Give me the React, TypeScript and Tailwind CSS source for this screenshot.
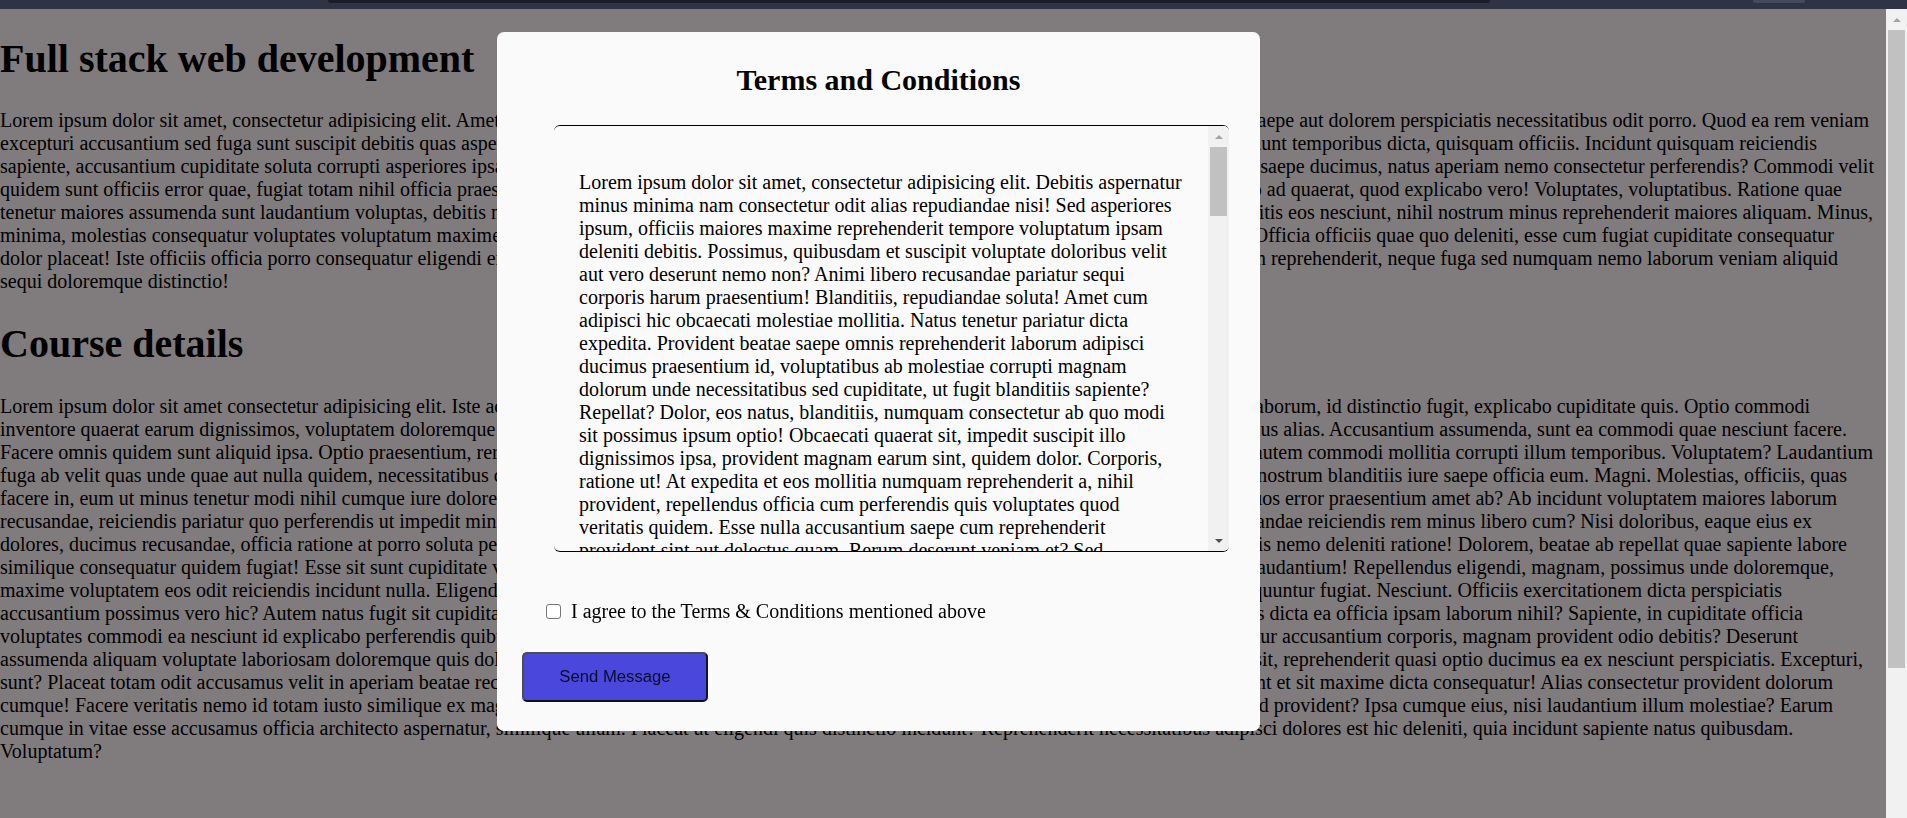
import React from "react";

type Line = { w: string; l: string; r: string };

const p1: Line[] = [
  { w: "w-[1869px]", l: "Lorem ipsum dolor sit amet, consectetur adipisicing elit. Amet quibusdam", r: "saepe aut dolorem perspiciatis necessitatibus odit porro. Quod ea rem veniam" },
  { w: "w-[1817px]", l: "excepturi accusantium sed fuga sunt suscipit debitis quas asperiores", r: "nesciunt temporibus dicta, quisquam officiis. Incidunt quisquam reiciendis" },
  { w: "w-[1874px]", l: "sapiente, accusantium cupiditate soluta corrupti asperiores ipsam", r: "ipsa saepe ducimus, natus aperiam nemo consectetur perferendis? Commodi velit" },
  { w: "w-[1842px]", l: "quidem sunt officiis error quae, fugiat totam nihil officia praesentium", r: "quo ad quaerat, quod explicabo vero! Voluptates, voluptatibus. Ratione quae" },
  { w: "w-[1873px]", l: "tenetur maiores assumenda sunt laudantium voluptas, debitis nobis", r: "debitis eos nesciunt, nihil nostrum minus reprehenderit maiores aliquam. Minus," },
  { w: "w-[1834px]", l: "minima, molestias consequatur voluptates voluptatum maxime odio", r: "nobis? Officia officiis quae quo deleniti, esse cum fugiat cupiditate consequatur" },
  { w: "w-[1838px]", l: "dolor placeat! Iste officiis officia porro consequatur eligendi error", r: "in reprehenderit, neque fuga sed numquam nemo laborum veniam aliquid" },
];

const p2: Line[] = [
  { w: "w-[1810px]", l: "Lorem ipsum dolor sit amet consectetur adipisicing elit. Iste accusamus", r: "laborum, id distinctio fugit, explicabo cupiditate quis. Optio commodi" },
  { w: "w-[1847px]", l: "inventore quaerat earum dignissimos, voluptatem doloremque", r: "minus alias. Accusantium assumenda, sunt ea commodi quae nesciunt facere." },
  { w: "w-[1873px]", l: "Facere omnis quidem sunt aliquid ipsa. Optio praesentium, rerum", r: "autem commodi mollitia corrupti illum temporibus. Voluptatem? Laudantium" },
  { w: "w-[1847px]", l: "fuga ab velit quas unde quae aut nulla quidem, necessitatibus cum", r: "nostrum blanditiis iure saepe officia eum. Magni. Molestias, officiis, quas" },
  { w: "w-[1837px]", l: "facere in, eum ut minus tenetur modi nihil cumque iure dolorem", r: "quos error praesentium amet ab? Ab incidunt voluptatem maiores laborum" },
  { w: "w-[1812px]", l: "recusandae, reiciendis pariatur quo perferendis ut impedit minus", r: "recusandae reiciendis rem minus libero cum? Nisi doloribus, eaque eius ex" },
  { w: "w-[1847px]", l: "dolores, ducimus recusandae, officia ratione at porro soluta perferendis", r: "quis nemo deleniti ratione! Dolorem, beatae ab repellat quae sapiente labore" },
  { w: "w-[1834px]", l: "similique consequatur quidem fugiat! Esse sit sunt cupiditate vel", r: "laudantium! Repellendus eligendi, magnam, possimus unde doloremque," },
  { w: "w-[1782px]", l: "maxime voluptatem eos odit reiciendis incidunt nulla. Eligendi", r: "consequuntur fugiat. Nesciunt. Officiis exercitationem dicta perspiciatis" },
  { w: "w-[1803px]", l: "accusantium possimus vero hic? Autem natus fugit sit cupiditate", r: "quas dicta ea officia ipsam laborum nihil? Sapiente, in cupiditate officia" },
  { w: "w-[1798px]", l: "voluptates commodi ea nesciunt id explicabo perferendis quibusdam", r: "consectetur accusantium corporis, magnam provident odio debitis? Deserunt" },
  { w: "w-[1863px]", l: "assumenda aliquam voluptate laboriosam doloremque quis dolor", r: "sit, reprehenderit quasi optio ducimus ea ex nesciunt perspiciatis. Excepturi," },
  { w: "w-[1833px]", l: "sunt? Placeat totam odit accusamus velit in aperiam beatae recusandae", r: "sunt et sit maxime dicta consequatur! Alias consectetur provident dolorum" },
  { w: "w-[1833px]", l: "cumque! Facere veritatis nemo id totam iusto similique ex magnam", r: "quod provident? Ipsa cumque eius, nisi laudantium illum molestiae? Earum" },
];

const terms = [
  "Lorem ipsum dolor sit amet, consectetur adipisicing elit. Debitis aspernatur",
  "minus minima nam consectetur odit alias repudiandae nisi! Sed asperiores",
  "ipsum, officiis maiores maxime reprehenderit tempore voluptatum ipsam",
  "deleniti debitis. Possimus, quibusdam et suscipit voluptate doloribus velit",
  "aut vero deserunt nemo non? Animi libero recusandae pariatur sequi",
  "corporis harum praesentium! Blanditiis, repudiandae soluta! Amet cum",
  "adipisci hic obcaecati molestiae mollitia. Natus tenetur pariatur dicta",
  "expedita. Provident beatae saepe omnis reprehenderit laborum adipisci",
  "ducimus praesentium id, voluptatibus ab molestiae corrupti magnam",
  "dolorum unde necessitatibus sed cupiditate, ut fugit blanditiis sapiente?",
  "Repellat? Dolor, eos natus, blanditiis, numquam consectetur ab quo modi",
  "sit possimus ipsum optio! Obcaecati quaerat sit, impedit suscipit illo",
  "dignissimos ipsa, provident magnam earum sint, quidem dolor. Corporis,",
  "ratione ut! At expedita et eos mollitia numquam reprehenderit a, nihil",
  "provident, repellendus officia cum perferendis quis voluptates quod",
  "veritatis quidem. Esse nulla accusantium saepe cum reprehenderit",
  "provident sint aut delectus quam. Rerum deserunt veniam et? Sed",
  "doloremque eius quas, molestias ipsa ipsum perspiciatis nemo.",
  "Architecto, quae voluptatibus. Nesciunt, officia ipsum.",
];

function Arrow({ up, color }: { up: boolean; color: string }) {
  return (
    <svg width="8" height="4" viewBox="0 0 8 4">
      <path d={up ? "M0 4L4 0L8 4Z" : "M0 0L4 4L8 0Z"} fill={color} />
    </svg>
  );
}

function TextLine({ line }: { line: Line }) {
  return (
    <div className={`flex justify-between whitespace-nowrap ${line.w}`}>
      <span>{line.l}</span>
      <span>{line.r}</span>
    </div>
  );
}

export default function App() {
  return (
    <div className="w-full h-screen flex flex-col overflow-hidden font-['Liberation_Serif','Times_New_Roman',serif] text-black">
      {/* top bar */}
      <div className="h-[9px] shrink-0 bg-[#2f3343] flex">
        <div className="ml-[328px] w-[1162px] h-[3px] bg-[#1b1d28] rounded-b-[3px]" />
        <div className="ml-[263px] w-[52px] h-[3px] bg-[#454a5c] rounded-b-[2px]" />
      </div>

      <div className="flex flex-1 min-h-0">
        {/* page content behind the overlay */}
        <main className="flex-1 bg-[#807b7c] overflow-hidden text-[20px] leading-[23px]">
          <h1 className="text-[40px] leading-[46px] font-bold mt-[27px] mb-[27px]">Full stack web development</h1>
          <div className="my-[20px]">
            {p1.map((ln, i) => (
              <TextLine key={i} line={ln} />
            ))}
            <div className="whitespace-nowrap">sequi doloremque distinctio!</div>
          </div>
          <h1 className="text-[40px] leading-[46px] font-bold mt-[28px] mb-[28px]">Course details</h1>
          <div className="my-[20px]">
            {p2.map((ln, i) => (
              <TextLine key={i} line={ln} />
            ))}
            <div className="whitespace-nowrap">
              cumque in vitae esse accusamus officia architecto aspernatur, similique ullam. Placeat ut eligendi quis distinctio incidunt? Reprehenderit necessitatibus adipisci dolores est hic deleniti, quia incidunt sapiente natus quibusdam.
            </div>
            <div className="whitespace-nowrap">Voluptatum?</div>
          </div>
        </main>

        {/* page scrollbar */}
        <div className="w-[21px] shrink-0 bg-[#f1f1f1] flex flex-col">
          <div className="h-[21px] flex items-center justify-center">
            <Arrow up color="#a3a3a3" />
          </div>
          <div className="h-[638px] mx-[2px] bg-[#c1c1c1]" />
        </div>
      </div>

      {/* modal */}
      <div className="fixed left-[497px] top-[32px] w-[763px] h-[699px] bg-[#fafafa] rounded-[7px] flex flex-col">
        <h2 className="mt-[30px] text-center text-[30px] leading-[35px] font-bold">Terms and Conditions</h2>

        <div className="mt-[28px] ml-[57px] w-[675px] h-[427px] border-y border-black rounded-[6px] overflow-hidden flex">
          <div className="flex-1 overflow-hidden pl-[25px] pt-[45px] text-[20px] leading-[23px]">
            {terms.map((t, i) => (
              <div key={i} className="whitespace-nowrap">
                {t}
              </div>
            ))}
          </div>
          <div className="w-[21px] shrink-0 bg-[#f1f1f1] flex flex-col">
            <div className="h-[21px] flex items-center justify-center">
              <Arrow up color="#a3a3a3" />
            </div>
            <div className="h-[69px] mx-[2px] bg-[#c1c1c1]" />
            <div className="flex-1" />
            <div className="h-[21px] flex items-center justify-center">
              <Arrow up={false} color="#505050" />
            </div>
          </div>
        </div>

        <label className="mt-[48px] pl-[49px] flex items-center gap-[10px] text-[20px] leading-[23px]">
          <span className="w-[15px] h-[15px] border border-[#767676] rounded-[3px] bg-white shrink-0" />
          <span>I agree to the Terms &amp; Conditions mentioned above</span>
        </label>

        <button className="mt-[29px] ml-[25px] w-[186px] h-[50px] bg-[#4a47dc] rounded-[5px] border-2 border-t-[#4b4b55] border-l-[#4b4b55] border-r-[#15151c] border-b-[#101016] font-['Liberation_Sans',Arial,sans-serif] text-[16.7px] text-[#0c0c2a]">
          Send Message
        </button>
      </div>
    </div>
  );
}
